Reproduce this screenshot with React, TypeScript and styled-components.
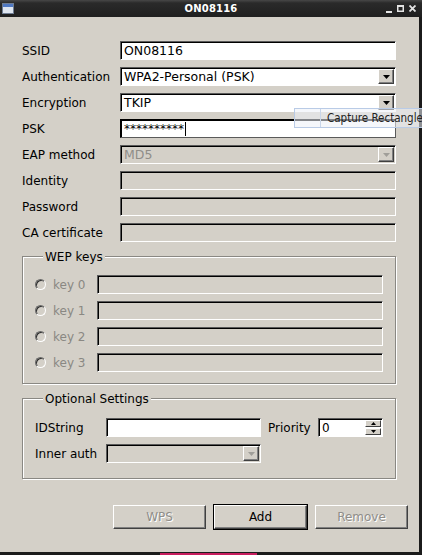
import React from 'react'
import styled, { createGlobalStyle, css } from 'styled-components'

const GlobalStyle = createGlobalStyle`
  html, body { margin: 0; padding: 0; background: #1b1b1b; }
  body { font-family: "DejaVu Sans", "Liberation Sans", sans-serif; font-size: 12px; color: #000; }
  * { box-sizing: border-box; }
`

const Window = styled.div`
  position: relative;
  width: 422px;
  height: 555px;
  overflow: hidden;
  display: flex;
  flex-direction: column;
  background: #d4d0c8;
`

const TitleBar = styled.div`
  height: 17px;
  flex: none;
  display: grid;
  grid-template-columns: 40px 1fr 40px;
  align-items: center;
  background: linear-gradient(#474747 0, #2a2a2a 3px, #1f1f1f 100%);
  color: #fff;
  padding: 0 2px;
`

const Title = styled.div`
  text-align: center;
  font-weight: bold;
  font-size: 10px;
  letter-spacing: 0.2px;
`

const TitleButtons = styled.div`
  display: flex;
  justify-content: flex-end;
  align-items: center;
  gap: 5px;
  padding-right: 4px;
`

const Body = styled.div`
  flex: 1;
  display: flex;
  flex-direction: column;
  border-right: 3px solid #1b1b1b;
`

const Content = styled.div`
  flex: 1;
  padding: 24px 11px 0 22px;
  display: flex;
  flex-direction: column;
`

const Form = styled.div`
  margin-right: 12px;
`

const FieldGrid = styled.div`
  display: grid;
  grid-template-columns: 98px 1fr;
  grid-auto-rows: 19px;
  row-gap: 7px;
  align-items: center;
`

const Label = styled.span<{ $disabled?: boolean }>`
  white-space: nowrap;
  color: ${p => (p.$disabled ? '#8a8883' : '#000')};
`

const sunken = css`
  border: 1px solid;
  border-color: #5a5a5a #fff #fff #5a5a5a;
  box-shadow: inset 1px 1px 0 #000;
`

const Field = styled.div<{ $disabled?: boolean; $focused?: boolean }>`
  ${sunken}
  height: 19px;
  display: flex;
  align-items: center;
  padding-left: 3px;
  background: ${p => (p.$disabled ? '#d4d0c8' : '#fff')};
  color: ${p => (p.$disabled ? '#8f8d88' : '#000')};
  white-space: nowrap;
  overflow: hidden;
  ${p => p.$focused && css`
    border-color: #000 #5a5a5a #5a5a5a #000;
  `}
`

const ComboValue = styled.span`
  flex: 1;
  font-size: 12.5px;
`

const ArrowButton = styled.span<{ $disabled?: boolean }>`
  flex: none;
  width: 16px;
  height: 15px;
  margin-right: 1px;
  display: flex;
  align-items: center;
  justify-content: center;
  background: #d4d0c8;
  border: 1px solid;
  border-color: #fff #404040 #404040 #fff;
  box-shadow: inset -1px -1px 0 #808080;
  color: ${p => (p.$disabled ? '#a09e99' : '#000')};
`

const Caret = styled.span`
  display: inline-block;
  width: 1px;
  height: 14px;
  background: #000;
  margin-left: 1px;
`

const Group = styled.div`
  margin-top: 14px;
  border: 1px solid #8a8883;
  box-shadow: inset 1px 1px 0 #fff, 1px 1px 0 #fff;
  padding: 0 12px 11px 12px;
`

const Legend = styled.div`
  width: fit-content;
  margin: -7px 0 0 8px;
  padding: 0 2px;
  line-height: 14px;
  background: #d4d0c8;
`

const KeyGrid = styled.div`
  margin-top: 11px;
  display: grid;
  grid-template-columns: 62px 1fr;
  grid-auto-rows: 19px;
  row-gap: 7px;
  align-items: center;
`

const RadioLabel = styled.span`
  display: flex;
  align-items: center;
  gap: 7px;
  color: #8a8883;
`

const Radio = styled.span`
  width: 11px;
  height: 11px;
  border-radius: 50%;
  border: 1px solid;
  border-color: #6a6a6a #fff #fff #6a6a6a;
  box-shadow: inset 1px 1px 0 #303030;
  background: #d4d0c8;
`

const OptionGrid = styled.div`
  margin-top: 12px;
  padding-bottom: 4px;
  display: grid;
  grid-template-columns: 71px 155px 57px 65px;
  grid-auto-rows: 19px;
  row-gap: 7px;
  align-items: center;
`

const SideLabel = styled(Label)`
  padding-left: 7px;
`

const SpinButtons = styled.span`
  margin-left: auto;
  margin-right: 1px;
  display: flex;
  flex-direction: column;
  gap: 1px;
`

const SpinButton = styled.span`
  width: 16px;
  height: 7px;
  display: flex;
  align-items: center;
  justify-content: center;
  background: #d4d0c8;
  border: 1px solid;
  border-color: #fff #404040 #404040 #fff;
  color: #000;
`

const ButtonBar = styled.div`
  margin-top: 26px;
  display: flex;
  justify-content: flex-end;
  gap: 8px;
`

const Button = styled.button<{ $default?: boolean }>`
  width: 93px;
  height: 24px;
  font: inherit;
  font-size: 12px;
  background: #d4d0c8;
  border: 1px solid;
  border-color: #fff #404040 #404040 #fff;
  box-shadow: inset -1px -1px 0 #808080;
  color: #000;
  &:disabled {
    color: #8f8d88;
    text-shadow: 1px 1px 0 #fff;
  }
  ${p => p.$default && css`
    outline: 1px solid #000;
  `}
`

const BottomEdge = styled.div`
  height: 3px;
  flex: none;
  background: #1b1b1b;
  display: flex;
  align-items: flex-end;
`

const PinkBar = styled.div`
  margin-left: 160px;
  width: 97px;
  height: 2px;
  background: #c81d5e;
`

const Tooltip = styled.div`
  position: absolute;
  left: 294px;
  top: 108px;
  width: 140px;
  height: 20px;
  border: 1px solid #b9cbe6;
  background: rgba(236, 240, 247, 0.55);
  display: flex;
  align-items: center;
  white-space: nowrap;
  font-family: "DejaVu Sans Condensed", "DejaVu Sans", sans-serif;
  font-size: 11.5px;
  color: #222;
`

const TooltipIcon = styled.span`
  flex: none;
  width: 26px;
  height: 100%;
  border-right: 1px solid #c9d6ea;
  margin-right: 6px;
`

const Arrow = ({ up }: { up?: boolean }) => (
  <svg width="7" height="4" viewBox="0 0 7 4">
    <polygon points={up ? '0,4 7,4 3.5,0' : '0,0 7,0 3.5,4'} fill="currentColor" />
  </svg>
)

const SmallArrow = ({ up }: { up?: boolean }) => (
  <svg width="5" height="3" viewBox="0 0 5 3">
    <polygon points={up ? '0,3 5,3 2.5,0' : '0,0 5,0 2.5,3'} fill="currentColor" />
  </svg>
)

const Combo: React.FC<{ value?: string; disabled?: boolean }> = ({ value, disabled }) => (
  <Field $disabled={disabled}>
    <ComboValue>{value}</ComboValue>
    <ArrowButton $disabled={disabled}><Arrow /></ArrowButton>
  </Field>
)

const WindowIcon = () => (
  <svg width="12" height="11" viewBox="0 0 12 11">
    <rect x="0.5" y="0.5" width="11" height="10" fill="#dfe6f0" stroke="#6f7d93" />
    <rect x="1" y="1" width="10" height="3" fill="#4f78c2" />
  </svg>
)

const WinControls = () => (
  <TitleButtons>
    <svg width="6" height="8" viewBox="0 0 6 8"><rect x="0" y="6" width="6" height="2" fill="#e4e4e4" /></svg>
    <svg width="7" height="7" viewBox="0 0 7 7"><rect x="0.75" y="0.75" width="5.5" height="5.5" fill="none" stroke="#e4e4e4" strokeWidth="1.5" /><rect x="0" y="0" width="7" height="2" fill="#e4e4e4" /></svg>
    <svg width="7" height="7" viewBox="0 0 7 7"><path d="M0.5 0.5 L6.5 6.5 M6.5 0.5 L0.5 6.5" stroke="#e4e4e4" strokeWidth="1.8" /></svg>
  </TitleButtons>
)

const keys = ['key 0', 'key 1', 'key 2', 'key 3']

const App: React.FC = () => {
  return (
    <Window>
      <GlobalStyle />
      <TitleBar>
        <WindowIcon />
        <Title>ON08116</Title>
        <WinControls />
      </TitleBar>
      <Body>
        <Content>
          <Form>
            <FieldGrid>
              <Label>SSID</Label>
              <Field><ComboValue>ON08116</ComboValue></Field>
              <Label>Authentication</Label>
              <Combo value="WPA2-Personal (PSK)" />
              <Label>Encryption</Label>
              <Combo value="TKIP" />
              <Label>PSK</Label>
              <Field $focused>**********<Caret /></Field>
              <Label>EAP method</Label>
              <Combo value="MD5" disabled />
              <Label>Identity</Label>
              <Field $disabled />
              <Label>Password</Label>
              <Field $disabled />
              <Label>CA certificate</Label>
              <Field $disabled />
            </FieldGrid>

            <Group>
              <Legend>WEP keys</Legend>
              <KeyGrid>
                {keys.map(k => (
                  <React.Fragment key={k}>
                    <RadioLabel><Radio />{k}</RadioLabel>
                    <Field $disabled />
                  </React.Fragment>
                ))}
              </KeyGrid>
            </Group>

            <Group>
              <Legend>Optional Settings</Legend>
              <OptionGrid>
                <Label>IDString</Label>
                <Field />
                <SideLabel>Priority</SideLabel>
                <Field>
                  0
                  <SpinButtons>
                    <SpinButton><SmallArrow up /></SpinButton>
                    <SpinButton><SmallArrow /></SpinButton>
                  </SpinButtons>
                </Field>
                <Label>Inner auth</Label>
                <Combo disabled />
              </OptionGrid>
            </Group>
          </Form>

          <ButtonBar>
            <Button disabled>WPS</Button>
            <Button $default>Add</Button>
            <Button disabled>Remove</Button>
          </ButtonBar>
        </Content>
      </Body>
      <BottomEdge><PinkBar /></BottomEdge>
      <Tooltip><TooltipIcon />Capture Rectangle</Tooltip>
    </Window>
  )
}

export default App
